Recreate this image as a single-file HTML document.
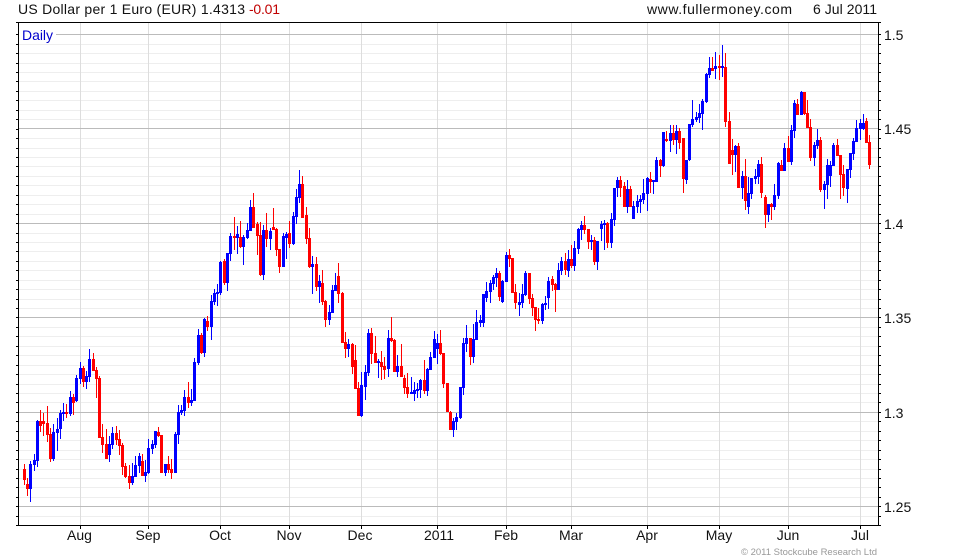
<!DOCTYPE html>
<html><head><meta charset="utf-8"><style>
html,body{margin:0;padding:0;background:#fff}
svg{display:block}
text{font-family:"Liberation Sans",Arial,sans-serif;font-size:14px;fill:#111}
</style></head><body>
<svg id="c" xmlns="http://www.w3.org/2000/svg" width="960" height="560" viewBox="0 0 960 560" shape-rendering="crispEdges">
<rect width="960" height="560" fill="#fff"/>
<g id="grid"></g>
<rect x="19" y="28" width="37" height="14" fill="#fff"/>
<g id="bars"></g>
<g id="axes"></g>
<text x="18" y="14" textLength="227" lengthAdjust="spacing">US Dollar per 1 Euro (EUR) 1.4313</text>
<text x="249" y="14" textLength="31" lengthAdjust="spacing" style="fill:#c00000">-0.01</text>
<text x="647" y="14" textLength="145" lengthAdjust="spacing">www.fullermoney.com</text>
<text x="813" y="14" textLength="64" lengthAdjust="spacing">6 Jul 2011</text>
<text x="22" y="40" textLength="31" lengthAdjust="spacing" style="fill:#0000cc">Daily</text>
<text x="884" y="40">1.5</text>
<text x="884" y="134">1.45</text>
<text x="884" y="229">1.4</text>
<text x="884" y="323">1.35</text>
<text x="884" y="418">1.3</text>
<text x="884" y="512">1.25</text>
<text x="79.5" y="540" text-anchor="middle">Aug</text>
<text x="148" y="540" text-anchor="middle">Sep</text>
<text x="220" y="540" text-anchor="middle">Oct</text>
<text x="289" y="540" text-anchor="middle">Nov</text>
<text x="360" y="540" text-anchor="middle">Dec</text>
<text x="439" y="540" text-anchor="middle">2011</text>
<text x="506" y="540" text-anchor="middle">Feb</text>
<text x="571" y="540" text-anchor="middle">Mar</text>
<text x="647" y="540" text-anchor="middle">Apr</text>
<text x="719" y="540" text-anchor="middle">May</text>
<text x="788" y="540" text-anchor="middle">Jun</text>
<text x="860" y="540" text-anchor="middle">Jul</text>
<text x="741" y="555" textLength="136" lengthAdjust="spacing" style="font-size:9.5px;fill:#999">© 2011 Stockcube Research Ltd</text>
</svg>
<script>
var NS="http://www.w3.org/2000/svg";
function R(p,x,y,w,h,f){var r=document.createElementNS(NS,"rect");r.setAttribute("x",x);r.setAttribute("y",y);r.setAttribute("width",w);r.setAttribute("height",h);r.setAttribute("fill",f);p.appendChild(r)}
var g=document.getElementById("grid"),a=document.getElementById("axes"),b=document.getElementById("bars");
var k,y;
for(k=0;k<=52;k++){y=Math.round(34.3+k*9.44-0.01);if(k%10)R(g,19,y,859,1,"#eeeeee")}
var mx=[80,148,220,289,361,437,506,571,647,719,788,860];
mx.forEach(function(x){R(g,x,23,1,502,"#dddddd")});
for(k=0;k<=5;k++){y=Math.round(34.3+k*94.4-0.3);R(g,19,y,859,1,"#bbbbbb")}
for(k=0;k<=52;k++){y=Math.round(34.3+k*9.44-0.01);R(a,16,y,2,1,"#000");R(a,879,y,2,1,"#000")}
R(a,16,22,2,1,"#000");R(a,879,22,2,1,"#000");
R(a,18,22,861,1,"#000");R(a,18,525,861,1,"#000");R(a,18,22,1,504,"#000");R(a,878,22,1,504,"#000");
R(a,16,525,2,1,"#000");R(a,879,525,2,1,"#000");
mx.forEach(function(x){R(a,x,526,1,3,"#000")});
var S=[
[20,340,"9,372,435,387,420,r 18,415,468,432,447,r 27,363,486,372,447,b 39,342,392,360,375,b 48,240,381,243,363,b 57,210,276,243,258,r 66,219,288,243,252,r 78,198,306,249,285,r 87,264,366,282,357,r 96,252,363,276,357,b 108,234,333,267,279,b 117,210,297,219,267,b 126,189,243,216,222,b 135,192,234,216,222,r 147,153,228,171,222,b 156,162,225,171,189,r 165,105,186,114,183,b 177,66,132,84,117,b 186,78,141,84,126,r 195,93,147,108,126,b 204,27,126,57,111,b 216,39,93,57,93,r 225,81,174,90,117,r 234,108,294,114,294,r 243,252,339,291,315,r 255,267,357,312,357,r 264,288,366,312,345,b 273,261,327,279,315,b 285,258,315,279,300,r 294,270,345,297,318,r 303,309,405,315,381,r 312,369,414,378,411,r 324,375,447,408,429,r 333,369,435,408,429,b 342,348,411,375,411,b 354,339,399,348,378,b 363,342,408,363,408,r 372,360,426,396,408,b 381,297,402,324,399,b 393,300,342,312,327,b 402,273,324,273,315,b 411,261,291,276,288,r 420,285,399,285,399,r 432,372,408,372,399,b 441,348,399,372,390,r 450,357,417,387,399,r 462,276,399,282,399,b 471,195,312,216,285,b"],
[180,160,"0,735,765,750,759,b 9,690,768,711,753,b 21,666,744,711,729,r 30,687,738,720,729,b 39,594,723,606,723,b 51,507,615,525,609,b 60,519,582,525,579,r 69,474,591,477,579,b 78,468,513,483,501,r 90,405,540,423,501,b 99,387,435,399,426,b 108,372,438,396,402,b 117,303,405,306,399,b 129,297,375,303,369,r 138,279,393,279,369,b 147,219,303,228,282,b 159,171,270,228,234,r 168,198,282,222,234,b 177,183,264,231,261,r 186,225,315,231,261,b 198,189,237,210,234,b 207,120,213,141,213,b 216,99,204,141,204,r 228,186,285,192,228,r 237,186,348,225,345,r 246,195,360,210,345,b 255,159,261,210,237,r 267,204,270,213,237,b 276,144,210,201,210,r 285,204,288,207,270,r 294,267,339,267,321,r 306,219,321,228,321,b 315,216,297,222,234,b 324,183,264,219,252,r 336,156,255,168,252,b 345,87,192,111,171,b 354,30,129,72,114,b 363,48,174,72,174,r 375,141,252,165,237,r 384,204,324,234,321,r 393,288,402,312,321,b 405,291,393,312,381,r 414,345,429,363,381,b 423,330,435,369,426,r 432,420,501,423,480,r 444,435,495,456,480,b 453,375,459,390,459,b 462,339,393,375,393,b 471,309,429,348,402,r 483,396,549,399,549,r 492,516,594,546,567,r 501,537,591,552,567,b 513,549,642,552,621,r 522,555,687,600,687,r 531,666,768,684,768,r"],
[340,240,"60,396,531,435,528,b 72,375,480,396,441,b 81,267,408,279,399,b 90,264,372,279,342,r 102,288,369,339,369,r 111,357,414,363,369,b 120,333,420,366,381,r 129,351,417,378,390,r 141,270,411,294,387,b 150,231,306,294,303,r 159,297,396,300,396,r 168,345,411,378,396,b 180,312,411,378,411,r 189,405,462,414,444,r 198,399,474,441,462,r 210,411,462,456,462,b 219,426,483,450,462,b 228,429,474,447,453,b 237,417,474,420,450,b 249,360,462,420,453,r 258,384,468,387,453,b 267,336,390,351,390,b 279,273,354,297,354,b 288,282,372,309,327,b 297,270,345,309,342,r 306,339,444,339,432,r 318,429,516,429,516,r 327,513,570,516,570,r 336,534,591,543,570,b 345,519,570,531,546,b 357,441,537,441,534,b 366,294,465,309,444,b 375,255,336,294,312,b 387,294,375,294,351,r 396,252,369,297,351,b 405,210,300,246,300,b 417,225,261,240,249,b 426,162,261,162,249,b 435,126,186,153,174,b 447,120,189,129,156,b 456,105,150,111,132,b 465,84,141,99,114,b 474,93,183,99,171,r 483,120,189,123,186,b 495,36,126,45,126,b 504,27,81,45,57,r 513,54,159,54,159,r 522,132,207,156,189,r 534,159,228,186,195,b"],
[500,120,"63,492,564,522,549,b 72,453,528,459,525,b 84,459,552,459,537,r 93,522,588,534,564,r 102,561,633,561,600,r 111,564,612,597,603,r 123,549,612,552,603,b 132,528,570,549,555,b 141,471,567,483,534,b 153,468,513,477,495,r 162,489,576,492,510,r 171,429,510,450,510,b 180,411,465,423,453,b 192,399,465,423,450,r 201,390,471,417,453,b 210,375,444,417,438,r 219,363,453,384,438,b 231,324,402,327,387,b 240,303,360,315,330,b 249,288,342,315,330,r 261,327,387,327,366,r 270,345,390,360,366,b 279,351,435,360,426,r 288,363,450,363,426,b 300,303,363,312,327,b 309,300,390,309,315,b 318,306,384,309,369,r 330,279,384,297,369,b 339,204,318,204,300,b 348,171,231,180,204,b 357,168,231,180,204,r 369,186,261,198,261,r 378,180,279,207,261,b 387,198,261,207,261,r 396,243,297,258,297,b 408,225,279,243,261,b 417,225,279,237,246,b 426,177,252,219,240,b 438,171,273,174,222,b 447,156,219,177,186,r 456,180,222,180,186,b 465,111,186,120,186,b 477,117,171,120,138,r 486,36,141,36,138,b 495,33,66,57,63,r 507,15,96,39,63,b 516,15,75,39,60,r 525,15,102,33,60,b 534,24,87,33,69,r 546,54,219,54,177,r 555,120,192,120,180,b"],
[680,30,"24,282,392,282,390,b 33,210,291,267,285,b 45,246,276,261,270,b 54,222,279,249,264,b 63,207,300,213,252,b 75,129,219,132,216,b 84,81,144,114,135,b 93,81,123,114,123,r 102,66,147,108,117,b 114,75,150,108,114,r 123,45,141,108,114,b 132,69,291,111,276,r 144,246,402,273,402,r 153,327,435,360,375,r 162,345,426,348,375,b 171,339,474,348,474,r 183,423,507,438,474,b 192,387,540,438,513,r 201,441,552,489,531,b 210,444,507,444,492,b 222,417,462,438,447,b 231,390,462,402,441,b 240,381,504,402,489,r 252,495,594,501,555,r 261,522,576,522,555,b 270,519,570,522,531,r 279,462,540,495,531,b 291,396,507,399,498,b 300,390,423,405,423,r 309,339,423,354,423,b 321,318,396,354,396,r 330,285,405,300,396,b 339,210,324,219,303,b 348,207,255,222,255,r 360,183,255,186,255,b 369,186,255,186,252,r 378,210,294,249,294,r 387,267,393,291,384,r 399,336,408,345,384,b 408,297,357,330,348,b 417,321,486,330,480,r 429,453,537,462,480,b 438,387,507,405,465,b 447,393,471,405,438,b 456,339,408,345,408,b 468,327,378,345,378,r 477,375,507,375,435,r 486,405,498,432,474,r 498,417,519,417,477,b 507,369,444,369,420,b 516,324,390,333,372,b 525,270,336,294,336,b 537,267,330,279,297,b 546,252,300,279,297,b 555,264,339,273,339,r 564,315,417,336,405,r"]
];
S.forEach(function(s){s[2].split(" ").forEach(function(e){var p=e.split(","),c=p[5]=="r"?"#ff0000":"#0000ff",x=s[0]+Math.round(+p[0]/3),
t=s[1]+Math.round(+p[1]/3),u=s[1]+Math.round(+p[2]/3),v=s[1]+Math.round(+p[3]/3),w=s[1]+Math.round(+p[4]/3);
R(b,x+1,t,1,u-t,c);R(b,x,v,3,Math.max(w-v,1),c)})});
</script>
</body></html>
